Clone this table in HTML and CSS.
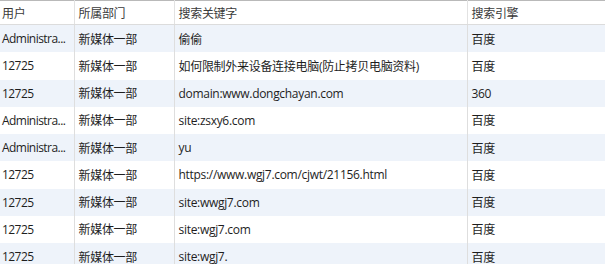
FILE: index.html
```html
<!DOCTYPE html>
<html lang="zh-CN">
<head>
<meta charset="utf-8">
<link rel="stylesheet" href="styles.css">
</head>
<body>
<table class="grid">
  <colgroup>
    <col class="c-user"><col class="c-dept"><col class="c-kw"><col class="c-eng">
  </colgroup>
  <thead>
    <tr><th class="first">用户</th><th>所属部门</th><th>搜索关键字</th><th>搜索引擎</th></tr>
  </thead>
  <tbody>
    <tr class="alt"><td class="first">Administra...</td><td>新媒体一部</td><td>偷偷</td><td>百度</td></tr>
    <tr><td class="first">12725</td><td>新媒体一部</td><td>如何限制外来设备连接电脑(防止拷贝电脑资料)</td><td>百度</td></tr>
    <tr class="alt"><td class="first">12725</td><td>新媒体一部</td><td>domain:www.dongchayan.com</td><td>360</td></tr>
    <tr><td class="first">Administra...</td><td>新媒体一部</td><td>site:zsxy6.com</td><td>百度</td></tr>
    <tr class="alt"><td class="first">Administra...</td><td>新媒体一部</td><td>yu</td><td>百度</td></tr>
    <tr><td class="first">12725</td><td>新媒体一部</td><td>https://www.wgj7.com/cjwt/21156.html</td><td>百度</td></tr>
    <tr class="alt"><td class="first">12725</td><td>新媒体一部</td><td>site:wwgj7.com</td><td>百度</td></tr>
    <tr><td class="first">12725</td><td>新媒体一部</td><td>site:wgj7.com</td><td>百度</td></tr>
    <tr class="alt"><td class="first">12725</td><td>新媒体一部</td><td>site:wgj7.</td><td>百度</td></tr>
  </tbody>
</table>
</body>
</html>
```
FILE: styles.css
```css
html, body {
  margin: 0;
  padding: 0;
  background: #ffffff;
  overflow: hidden;
}
.grid {
  border-collapse: collapse;
  table-layout: fixed;
  width: 605px;
  font-family: "Open Sans", "Noto Sans CJK SC", sans-serif;
  font-size: 12px;
  letter-spacing: -0.3px;
  color: #1e1e1e;
  border-top: 1px solid #b9b9b9;
}
.c-user { width: 74px; }
.c-dept { width: 100px; }
.c-kw { width: 293px; }
.c-eng { width: 138px; }
.grid th {
  height: 23px;
  padding: 0 4px;
  text-align: left;
  font-weight: normal;
  color: #3a3a3a;
  background: #ffffff;
  border-bottom: 1px solid #dcdcdc;
  border-left: 1px solid #e2e2e2;
  white-space: nowrap;
}
.grid td {
  height: 27.25px;
  padding: 0 4px;
  border-left: 1px solid #dedede;
  white-space: nowrap;
}
.grid .first {
  border-left: none;
  padding-left: 2px;
  padding-right: 0;
}
.grid td.first {
  letter-spacing: -0.55px;
}
.grid tr.alt td {
  background: #eef3fa;
}
```
